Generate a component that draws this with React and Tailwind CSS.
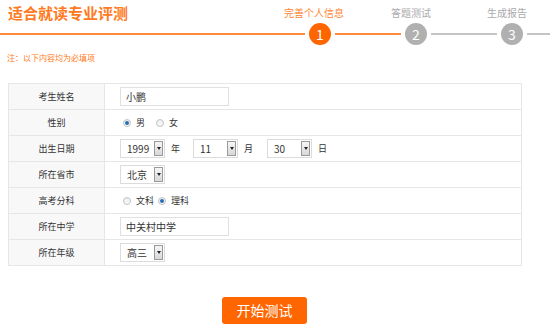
import React from 'react';

const FONT = { fontFamily: '"Microsoft YaHei", "Noto Sans CJK SC", "Noto Sans", sans-serif' };

function Select({ value, width = 'w-[45px]' }) {
  return (
    <div className={`${width} h-[19px] border border-[#dcdcdc] bg-white flex items-center justify-between pl-[6px] pr-[1px]`}>
      <span className="text-[10px] text-[#333] leading-none">{value}</span>
      <span className="w-[9px] h-[15px] border border-[#9a9a9a] bg-gradient-to-b from-[#f6f6f6] to-[#d8d8d8] flex items-center justify-center">
        <span className="w-0 h-0 border-l-[2px] border-r-[2px] border-t-[3px] border-l-transparent border-r-transparent border-t-[#222]" />
      </span>
    </div>
  );
}

function Radio({ checked }) {
  return (
    <span className="w-[8px] h-[8px] rounded-full border border-[#c4c4c4] bg-gradient-to-b from-[#eee] to-[#fafafa] flex items-center justify-center">
      {checked && <span className="w-[4px] h-[4px] rounded-full bg-[#2a6fb5]" />}
    </span>
  );
}

function Row({ label, children }) {
  return (
    <tr className="h-[26px]">
      <td className="w-[96px] border border-[#e6e6e6] bg-[#f8f8f8] text-center text-[9px] text-[#333]">{label}</td>
      <td className="border border-[#e6e6e6] bg-white pl-[15px]">{children}</td>
    </tr>
  );
}

export default function App() {
  return (
    <div className="w-[550px] h-[330px] bg-white overflow-hidden" style={FONT}>
      {/* header */}
      <div className="h-[23px] flex items-end">
        <h1 className="ml-[8px] text-[15px] font-bold text-[#ff7a22] leading-none pb-[3px]">适合就读专业评测</h1>
        <div className="ml-auto flex pb-[5px]">
          <span className="w-[80px] text-center text-[10px] leading-none text-[#ff8533]">完善个人信息</span>
          <span className="w-[80px] ml-[17px] text-center text-[10px] leading-none text-[#aaa]">答题测试</span>
          <span className="w-[80px] ml-[16px] mr-[3px] text-center text-[10px] leading-none text-[#aaa]">生成报告</span>
        </div>
      </div>
      <div className="h-[22px] flex items-center">
        <div className="flex-1 h-[2px] bg-[#ff8a3d]" />
        <span className="ml-[4px] w-[22px] h-[22px] rounded-full bg-[#ff6600] text-white text-[14px] flex items-center justify-center">1</span>
        <div className="ml-[4px] w-[66px] h-[2px] bg-[#ff8a3d]" />
        <span className="ml-[4px] w-[22px] h-[22px] rounded-full bg-[#b0b0b0] text-white text-[14px] flex items-center justify-center">2</span>
        <div className="ml-[4px] w-[66px] h-[2px] bg-[#c4c4c4]" />
        <span className="ml-[4px] w-[22px] h-[22px] rounded-full bg-[#b0b0b0] text-white text-[14px] flex items-center justify-center">3</span>
        <div className="ml-[4px] w-[23px] h-[2px] bg-[#c4c4c4]" />
      </div>

      <p className="mt-[9px] ml-[7px] text-[8px] leading-none text-[#ff7a22]">注：以下内容均为必填项</p>

      <table className="mt-[21px] ml-[8px] w-[514px] border-collapse">
        <tbody>
          <Row label="考生姓名">
            <div className="w-[109px] h-[19px] border border-[#e0e0e0] flex items-center pl-[5px] text-[10px] text-[#333]">小鹏</div>
          </Row>
          <Row label="性别">
            <div className="flex items-center text-[9px] text-[#333] pl-[3px]">
              <Radio checked />
              <span className="ml-[5px]">男</span>
              <span className="ml-[11px]"><Radio /></span>
              <span className="ml-[5px]">女</span>
            </div>
          </Row>
          <Row label="出生日期">
            <div className="flex items-center text-[9px] text-[#333]">
              <Select value="1999" />
              <span className="ml-[6px]">年</span>
              <span className="ml-[13px]"><Select value="11" /></span>
              <span className="ml-[6px]">月</span>
              <span className="ml-[14px]"><Select value="30" /></span>
              <span className="ml-[6px]">日</span>
            </div>
          </Row>
          <Row label="所在省市">
            <Select value="北京" />
          </Row>
          <Row label="高考分科">
            <div className="flex items-center text-[9px] text-[#333] pl-[3px]">
              <Radio />
              <span className="ml-[5px]">文科</span>
              <span className="ml-[4px]"><Radio checked /></span>
              <span className="ml-[5px]">理科</span>
            </div>
          </Row>
          <Row label="所在中学">
            <div className="w-[109px] h-[19px] border border-[#e0e0e0] flex items-center pl-[5px] text-[10px] text-[#333]">中关村中学</div>
          </Row>
          <Row label="所在年级">
            <Select value="高三" />
          </Row>
        </tbody>
      </table>

      <button className="mt-[31px] ml-[222px] w-[85px] h-[27px] rounded-[3px] bg-[#ff6600] text-white text-[14px] flex items-center justify-center">
        开始测试
      </button>
    </div>
  );
}
